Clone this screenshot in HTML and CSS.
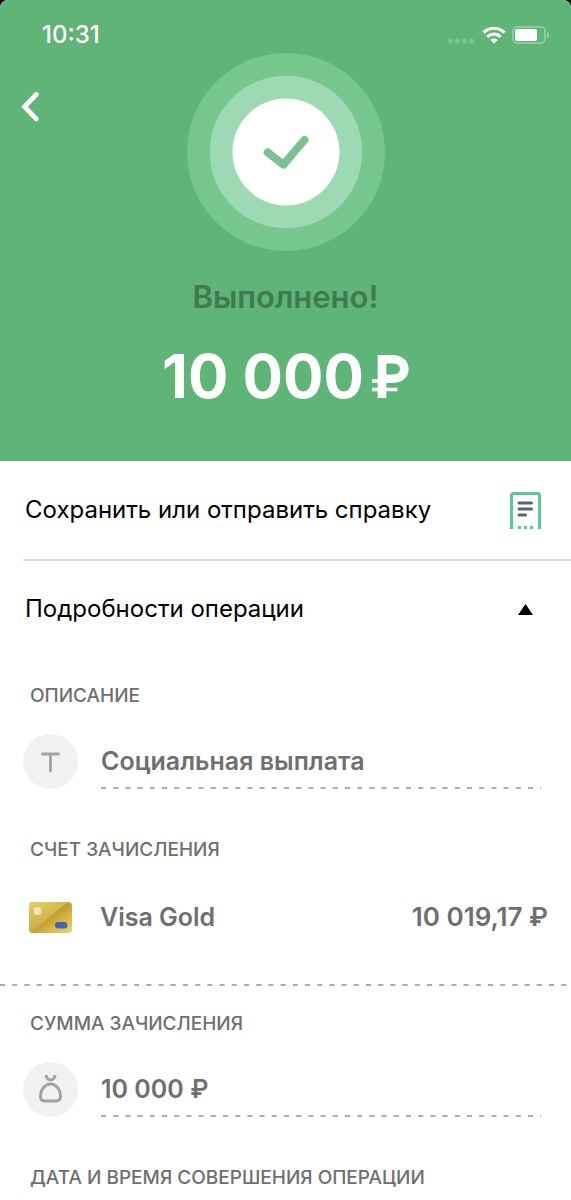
FILE: index.html
```html
<!DOCTYPE html>
<html lang="ru">
<head>
<meta charset="utf-8">
<meta name="viewport" content="width=device-width, initial-scale=1">
<title>Выполнено</title>
<link rel="stylesheet" href="styles.css">
</head>
<body>
<div class="screen">
  <header class="hero">
    <div class="status">
      <time class="clock">10:31</time>
      <div class="indicators">
        <svg width="28" height="6" viewBox="0 0 28 6" fill="#80c693" aria-hidden="true"><circle cx="2.500" cy="3" r="2.500"/><circle cx="9.500" cy="3" r="2.500"/><circle cx="16.500" cy="3" r="2.500"/><circle cx="23.500" cy="3" r="2.500"/></svg>
        <svg class="wifi" width="24" height="18" viewBox="0 0 24 18" fill="none" stroke="#fff" stroke-width="3.2" aria-hidden="true"><path d="M1.500 6.600C7.400 .8 16.600 .8 22.500 6.600"/><path d="M5.300 10.900C9.200 7.300 14.800 7.300 18.700 10.900"/><path d="M12 17.500L8.300 13.900C10.400 12 13.600 12 15.700 13.900Z" fill="#fff" stroke="none"/></svg>
        <svg width="38" height="18" viewBox="0 0 38 18" aria-hidden="true"><rect x="1" y="1" width="32" height="16" rx="4" fill="none" stroke="#9bd2a9" stroke-width="1.500"/><rect x="3" y="3" width="22" height="12" rx="2" fill="#fff"/><path d="M35 6v6q2-1 2-3t-2-3z" fill="#9bd2a9"/></svg>
      </div>
    </div>
    <div class="emblem-row">
      <button class="back" type="button" aria-label="Назад">
        <svg width="18" height="30" viewBox="0 0 18 30" fill="none" stroke="#fff" stroke-width="4.800" stroke-linecap="round" stroke-linejoin="miter" aria-hidden="true"><path d="M15.200 2.500L3.600 14.700L15.200 26.900"/></svg>
      </button>
      <svg class="emblem" width="198" height="198" viewBox="0 0 198 198" aria-hidden="true"><circle cx="99" cy="99" r="99" fill="#75c78d"/><circle cx="99" cy="99" r="76.300" fill="#9dd9b2"/><circle cx="99" cy="99" r="53.500" fill="#fff"/><path d="M80.600 99.400L96.400 111.600L117.400 87" fill="none" stroke="#7ac390" stroke-width="8" stroke-linecap="round" stroke-linejoin="round"/></svg>
    </div>
    <h1 class="state">Выполнено!</h1>
    <p class="amount"><span>10 000</span><svg width="37" height="43" viewBox="0 0 37 43" role="img" aria-label="рублей" fill="none" stroke="#fff"><path d="M10 43V4.200H20.500C28 4.200 32.300 8.300 32.300 14S28 23.800 20.500 23.800H10" stroke-width="8.600"/><path d="M0 26H8M0 34.500H25.500" stroke-width="3.600"/></svg></p>
  </header>
  <main>
    <button class="action" type="button">
      <span>Сохранить или отправить справку</span>
      <svg width="31" height="37" viewBox="0 0 31 37" fill="none" aria-hidden="true"><path d="M1.500 37V3.500Q1.500 1.500 3.500 1.500H27.500Q29.500 1.500 29.500 3.500V37" stroke="#5ac69a" stroke-width="3"/><path d="M9 11H21.500M9 17H21.500M9 23H15.500" stroke="#5b6378" stroke-width="3" stroke-linecap="round"/><path d="M8 35.500H11M14 35.500H17M20 35.500H23" stroke="#5ac69a" stroke-width="3"/></svg>
    </button>
    <button class="action details-toggle" type="button" aria-expanded="true" aria-controls="details">
      <span>Подробности операции</span>
      <svg class="caret" width="15" height="11" viewBox="0 0 15 11" aria-hidden="true"><path d="M7.500 0L15 11H0Z" fill="#000"/></svg>
    </button>
    <section id="details" class="details">
      <h2 class="label">ОПИСАНИЕ</h2>
      <div class="field">
        <svg width="55" height="55" viewBox="0 0 55 55" aria-hidden="true"><circle cx="27.500" cy="27.500" r="27.500" fill="#f1f1f1"/><path d="M19.500 20H35.500M27.500 20V37" fill="none" stroke="#a3a3a3" stroke-width="2.800" stroke-linecap="round"/></svg>
        <div class="entry">
          <p class="value">Социальная выплата</p>
          <svg class="dashes" aria-hidden="true"><line x1="0" y1="1" x2="100%" y2="1"/></svg>
        </div>
      </div>
      <h2 class="label">СЧЕТ ЗАЧИСЛЕНИЯ</h2>
      <div class="account">
        <svg width="43" height="31" viewBox="0 0 43 31" aria-hidden="true"><defs><linearGradient id="gold-a" x1="0" y1="0" x2="1" y2="1"><stop offset="0" stop-color="#e3ce65"/><stop offset=".5" stop-color="#c69e32"/><stop offset="1" stop-color="#efdb67"/></linearGradient><linearGradient id="gold-b" x1="0" y1="0" x2=".6" y2="1"><stop offset="0" stop-color="#e3d069"/><stop offset="1" stop-color="#c79f35"/></linearGradient><clipPath id="card-shape"><rect width="43" height="31" rx="4"/></clipPath></defs><g clip-path="url(#card-shape)"><rect width="43" height="31" fill="url(#gold-a)"/><path d="M0 0H38L2 31H0Z" fill="url(#gold-b)"/></g><circle cx="8.500" cy="9" r="4" fill="#f2e6b5"/><rect x="26" y="20" width="12.500" height="6.500" rx="3" fill="#4562bd"/></svg>
        <p class="value">Visa Gold</p>
        <p class="value balance">10 019,17 ₽</p>
      </div>
      <svg class="dashes" aria-hidden="true"><line x1="0" y1="1" x2="100%" y2="1"/></svg>
      <h2 class="label label-spaced">СУММА ЗАЧИСЛЕНИЯ</h2>
      <div class="field">
        <svg width="55" height="55" viewBox="0 0 55 55" aria-hidden="true"><circle cx="27.500" cy="27.500" r="27.500" fill="#f1f1f1"/><path d="M23.200 13C23.400 19.400 31.800 19.400 32 13M27.500 22C21.500 22 17.400 28.500 17.400 34Q17.400 39 22 39H33Q37.600 39 37.600 34C37.600 28.500 33.500 22 27.500 22Z" fill="none" stroke="#a3a3a3" stroke-width="3"/></svg>
        <div class="entry">
          <p class="value">10 000 ₽</p>
          <svg class="dashes" aria-hidden="true"><line x1="0" y1="1" x2="100%" y2="1"/></svg>
        </div>
      </div>
      <h2 class="label">ДАТА И ВРЕМЯ СОВЕРШЕНИЯ ОПЕРАЦИИ</h2>
    </section>
  </main>
</div>
</body>
</html>
```
FILE: styles.css
```css
* { box-sizing: border-box; }

body {
  margin: 0;
  background: #000;
  font-family: Inter, "Liberation Sans", sans-serif;
  color: #000;
}

h1, h2, p { margin: 0; }

button {
  padding: 0;
  border: 0;
  background: none;
  color: inherit;
  font: inherit;
  cursor: pointer;
}

svg { display: block; flex: none; }

.screen {
  min-height: 100vh;
  border-radius: 8px 8px 0 0;
  background: #fff;
  overflow: hidden;
}

.hero {
  padding-bottom: 49px;
  background: #5fb577;
  color: #fff;
  text-align: center;
}

.status {
  display: flex;
  justify-content: space-between;
  align-items: center;
  padding: 17px 21px 0 42px;
}

.clock {
  font-size: 24px;
  line-height: 36px;
  font-weight: 500;
}

.indicators { display: flex; align-items: center; gap: 6px; }
.indicators svg:first-child { margin-top: 12px; }

.emblem-row {
  display: grid;
  grid-template-columns: 1fr auto 1fr;
  align-items: center;
}

.back { justify-self: start; padding: 0 21px 90px; }

.state {
  margin-top: 28px;
  color: #3e7b50;
  font-size: 31px;
  line-height: 36px;
  font-weight: 600;
}

.amount {
  display: flex;
  justify-content: center;
  align-items: center;
  gap: 8px;
  margin-top: 25px;
  font-size: 60px;
  line-height: 72px;
  font-weight: 700;
}

.action {
  display: flex;
  justify-content: space-between;
  align-items: center;
  width: 100%;
  height: 98px;
  padding: 0 30px 0 25px;
  font-size: 24px;
  line-height: 30px;
  text-align: left;
}

.details-toggle {
  height: 100px;
  background: linear-gradient(#dcdcdc, #dcdcdc) 23px 0 / 100% 2px no-repeat;
}

.caret { margin-right: 8px; }

.details { padding-top: 25px; color: #6f6f6f; }

.label {
  padding: 0 30px;
  font-size: 19px;
  line-height: 24px;
  font-weight: 500;
}

.label-spaced { margin-top: 26px; }

.field {
  display: flex;
  gap: 23px;
  padding: 0 30px 0 23px;
  margin: 26px 0 49px;
}

.entry {
  display: flex;
  flex-direction: column;
  justify-content: space-between;
  flex: 1;
  padding-top: 11px;
}

.value {
  font-size: 25px;
  line-height: 32px;
  font-weight: 600;
}

.dashes {
  width: 100%;
  height: 2px;
  stroke: #acacac;
  stroke-width: 2px;
  stroke-dasharray: 5 7.2;
}

.account {
  display: flex;
  align-items: center;
  gap: 28px;
  margin-top: 26px;
  padding: 13px 23px 51px 29px;
}

.balance {
  margin-left: auto;
  font-size: 26px;
}
```
